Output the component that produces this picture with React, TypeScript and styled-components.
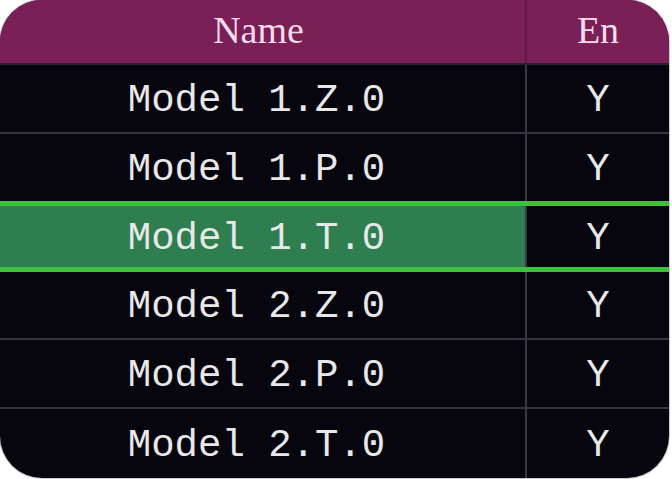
import React from "react";
import styled, { createGlobalStyle } from "styled-components";

const Global = createGlobalStyle`
  html, body { margin: 0; padding: 0; background: #ffffff; }
  #root { width: 672px; height: 479px; }
`;

const Card = styled.div`
  width: 669px;
  height: 478px;
  border-radius: 42px;
  overflow: hidden;
  background: #07060f;
  display: grid;
  grid-template-rows: 65px repeat(6, 1fr);
  box-shadow: 0 0 0 1px #c9c9cf;
`;

const Row = styled.div<{ $highlight?: boolean; $header?: boolean }>`
  display: grid;
  grid-template-columns: 525px 1fr;
  box-sizing: border-box;
  border-bottom: ${(p) => (p.$header ? "2px solid #2a1f33" : "2px solid #34343f")};
  ${(p) =>
    p.$highlight &&
    `
    border-top: 5px solid #3dc13c;
    border-bottom: 5px solid #3dc13c;
    margin-top: -2px;
  `}
  &:last-child { border-bottom: none; }
`;

const HeaderCell = styled.div<{ $first?: boolean }>`
  display: flex;
  align-items: center;
  justify-content: center;
  background: #7b1f57;
  color: #f5dcea;
  font-family: "Liberation Serif", "Times New Roman", serif;
  font-size: 38px;
  padding-bottom: 4px;
  padding-right: ${(p) => (p.$first ? "8px" : "0")};
  border-left: ${(p) => (p.$first ? "none" : "2px solid #5e1a45")};
`;

const Cell = styled.div<{ $first?: boolean; $active?: boolean }>`
  display: flex;
  align-items: center;
  justify-content: center;
  background: ${(p) => (p.$active ? "#2e7e50" : "transparent")};
  color: #e8e8e8;
  font-family: "Liberation Mono", "Courier New", monospace;
  font-size: 39px;
  white-space: pre;
  padding-top: 5px;
  padding-right: ${(p) => (p.$first ? "12px" : "0")};
  border-left: ${(p) => (p.$first ? "none" : "2px solid #383845")};
`;

const rows = [
  "Model 1.Z.0",
  "Model 1.P.0",
  "Model 1.T.0",
  "Model 2.Z.0",
  "Model 2.P.0",
  "Model 2.T.0",
];

export default function App() {
  return (
    <>
      <Global />
      <Card>
        <Row $header>
          <HeaderCell $first>Name</HeaderCell>
          <HeaderCell>En</HeaderCell>
        </Row>
        {rows.map((name, i) => (
          <Row key={name} $highlight={i === 2}>
            <Cell $first $active={i === 2}>
              {name}
            </Cell>
            <Cell>Y</Cell>
          </Row>
        ))}
      </Card>
    </>
  );
}
